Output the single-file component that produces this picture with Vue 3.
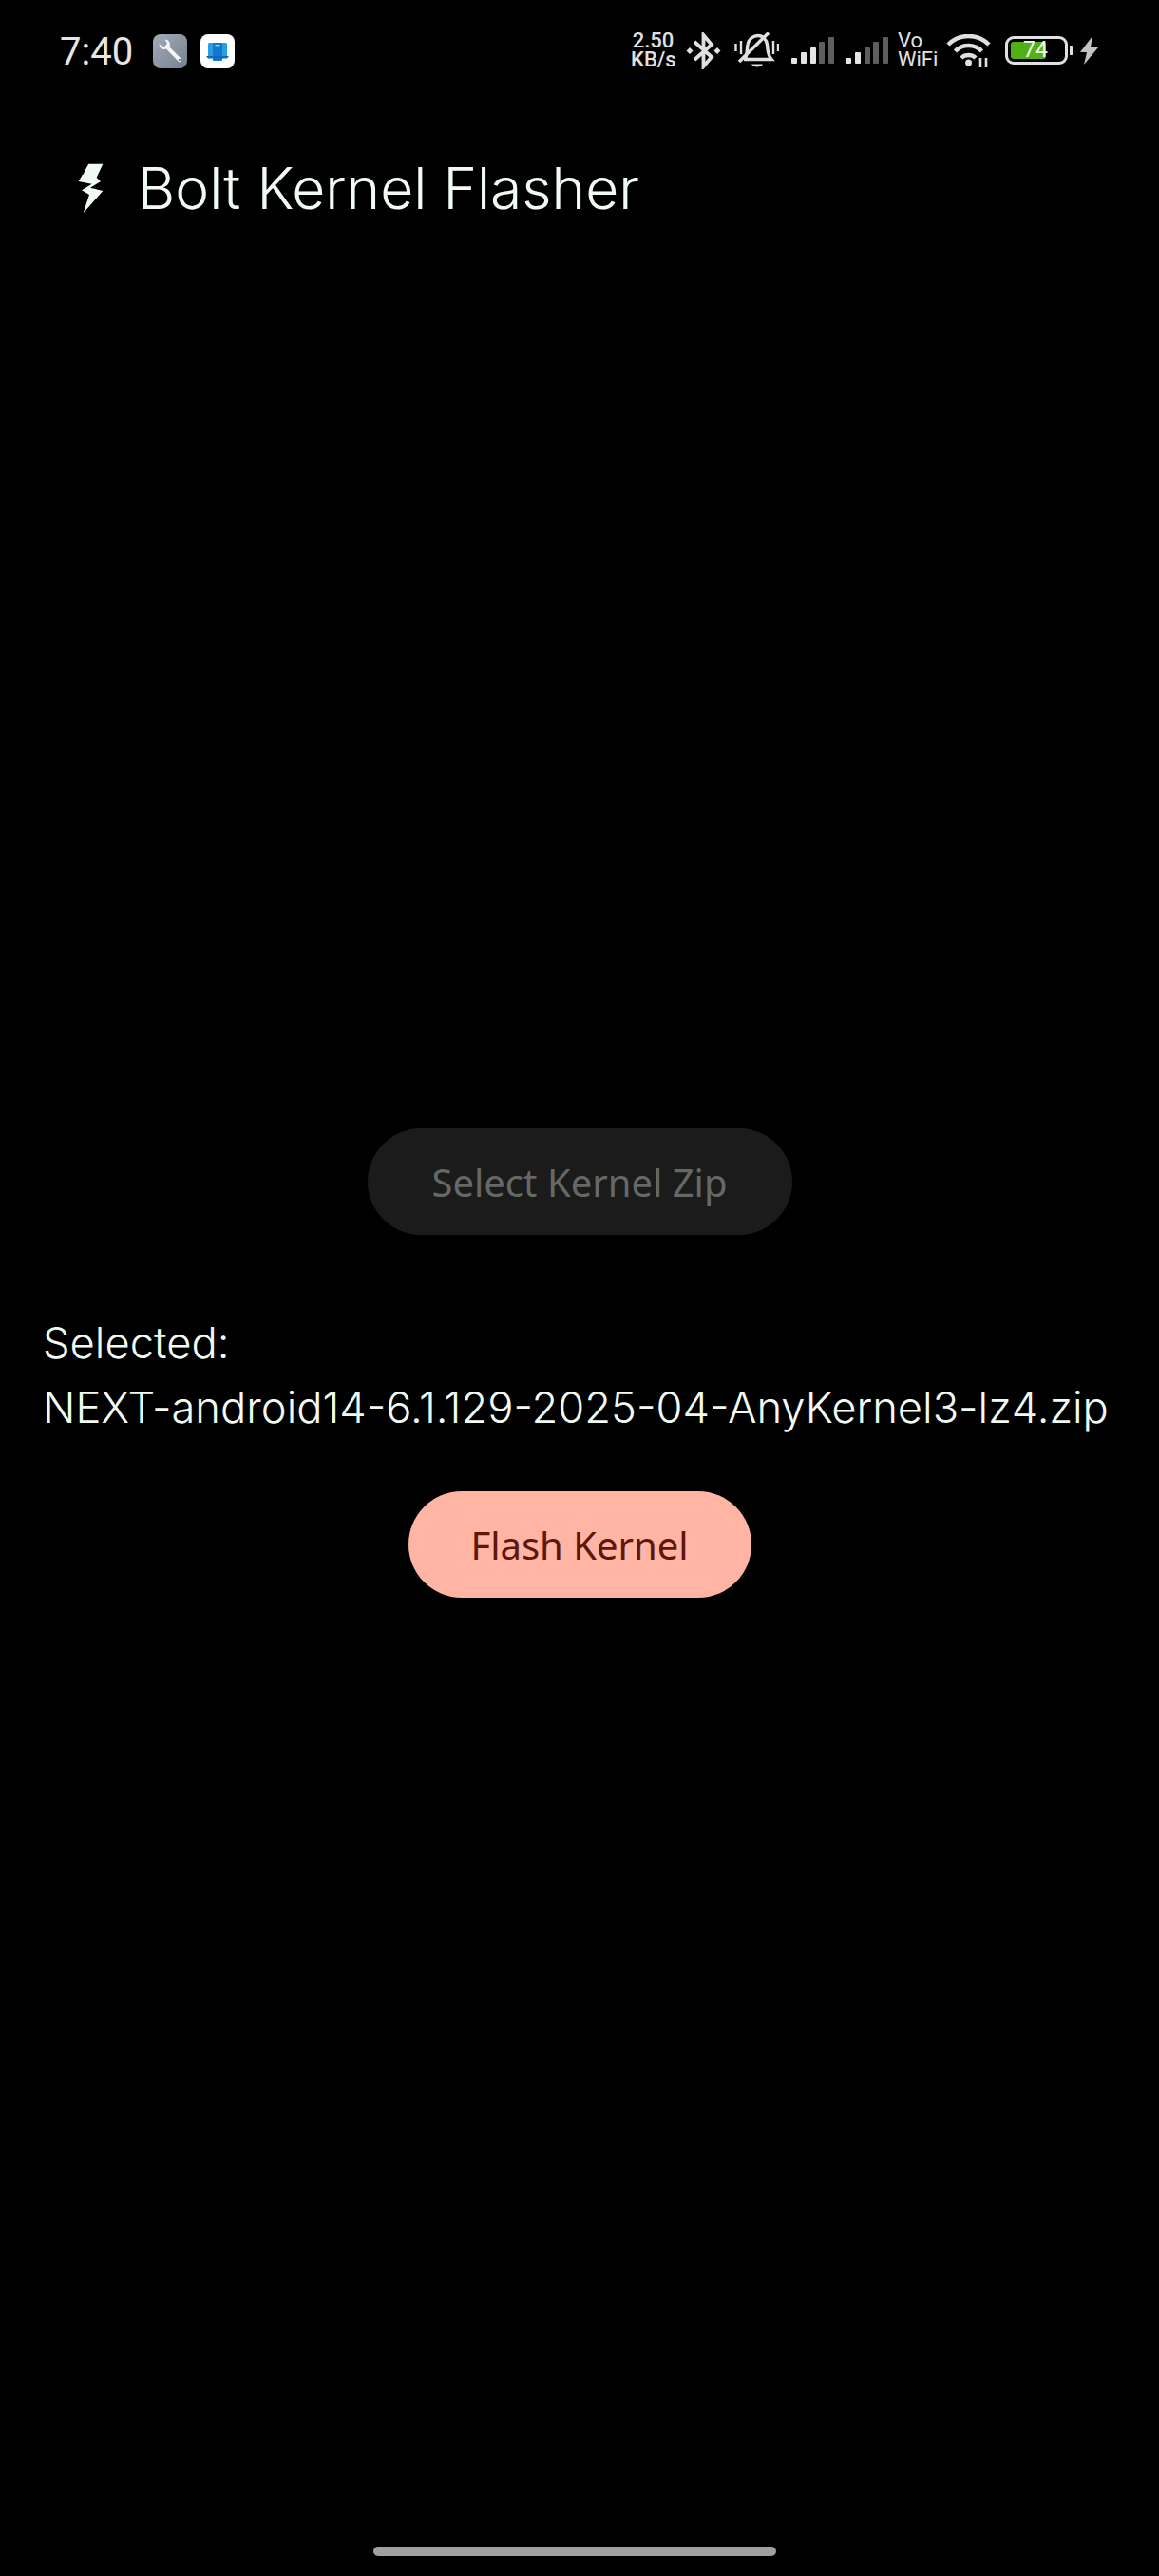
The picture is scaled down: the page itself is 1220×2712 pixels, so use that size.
<template>
  <div class="page">
    <!-- Status bar -->
    <div class="status-bar">
      <div class="status-left">
        <span class="clock">7:40</span>
        <svg class="app-icon" viewBox="0 0 36 36" width="36" height="36">
          <defs>
            <linearGradient id="wrenchBg" x1="0" y1="0" x2="1" y2="1">
              <stop offset="0" stop-color="#a3adb9" />
              <stop offset="1" stop-color="#76818f" />
            </linearGradient>
          </defs>
          <rect width="36" height="36" rx="8" fill="url(#wrenchBg)" />
          <path d="M6.500 10 C6.500 15 10.500 17 14 15.500 L26.500 28.500 C28 30.500 31.500 28 29.500 25.500 L17.500 13.500 C19 9 16 5.500 12.500 5.500 L15 9.500 L12.500 13 L9 12.500 Z" fill="#f4f5f6" />
          <circle cx="28" cy="27" r="1.300" fill="#7f8a98" />
        </svg>
        <svg class="app-icon" viewBox="0 0 36 36" width="36" height="36">
          <rect width="36" height="36" rx="8" fill="#fff" />
          <rect x="8" y="9" width="20" height="15" rx="1.500" fill="#2a9fe0" />
          <rect x="13" y="9" width="10" height="19" rx="1" fill="#0f78d0" />
          <rect x="15.500" y="11" width="5" height="1.500" fill="#8fd3f5" />
          <path d="M6 23 H30 L28 25.500 H8 Z" fill="#1565b8" />
        </svg>
      </div>

      <div class="status-right">
        <span class="speed">2.50<br />KB/s</span>
        <svg class="ic-bt" viewBox="0 0 37 39" width="37" height="39" fill="none" stroke="#e0e0e0" stroke-width="3.800">
          <path d="M9 10 L27 26 L18.500 36 V3 L27 13 L9 29" />
          <path d="M4 16 L7.500 19.500 L4 23 L0.500 19.500 Z M33 16 L36.500 19.500 L33 23 L29.500 19.500 Z" fill="#e0e0e0" stroke="none" />
        </svg>
        <svg class="ic-bell" viewBox="0 0 47 38" width="47" height="38" fill="none" stroke="#e0e0e0" stroke-width="3.400">
          <path d="M11 28 C14 24 13 18 14 13 C15 7 20 3.500 25 3.500 C30 3.500 34 8 34.500 13 C35 19 35 24 39 28.500 H10" />
          <path d="M36 0.500 L5 31" />
          <path d="M18 33.500 H30 C28 37.500 20 37.500 18 33.500 Z" fill="#e0e0e0" stroke="none" />
          <path d="M1.500 12 V20 M7 9 V23 M41 9 V23 M46 12 V20" stroke-width="2.400" />
        </svg>
        <svg class="ic-signal" viewBox="0 0 45 28" width="45" height="28">
          <rect x="0" y="22" width="6" height="6" rx="1" fill="#e4e4e4" />
          <rect x="10" y="16" width="6" height="12" rx="1" fill="#e4e4e4" />
          <rect x="20" y="11" width="6" height="17" rx="1" fill="#e4e4e4" />
          <rect x="29" y="5" width="6" height="23" rx="1" fill="#5e5e5e" />
          <rect x="39" y="0" width="6" height="28" rx="1" fill="#5e5e5e" />
        </svg>
        <svg class="ic-signal" viewBox="0 0 45 28" width="45" height="28">
          <rect x="0" y="22" width="6" height="6" rx="1" fill="#e4e4e4" />
          <rect x="10" y="16" width="6" height="12" rx="1" fill="#e4e4e4" />
          <rect x="20" y="11" width="6" height="17" rx="1" fill="#5e5e5e" />
          <rect x="29" y="5" width="6" height="23" rx="1" fill="#5e5e5e" />
          <rect x="39" y="0" width="6" height="28" rx="1" fill="#5e5e5e" />
        </svg>
        <span class="vowifi">Vo<br />WiFi</span>
        <svg class="ic-wifi" viewBox="0 0 47 35" width="47" height="35" fill="none" stroke="#e0e0e0" stroke-width="4.500">
          <path d="M2 11 C14 -1 33 -1 45 11" />
          <path d="M9.500 18 C17 10 30 10 37.500 18" />
          <path d="M16 25 C20 21 27 21 31 25" />
          <circle cx="23.500" cy="30" r="3.500" fill="#e0e0e0" stroke="none" />
          <path d="M36 25 V35 M42 25 V35" stroke-width="2.600" />
        </svg>
        <div class="battery">
          <div class="battery-body">
            <div class="battery-fill"></div>
            <span class="battery-level">74</span>
          </div>
          <div class="battery-tip"></div>
        </div>
        <svg class="ic-charge" viewBox="0 0 19 30" width="19" height="30">
          <path d="M13 0 L0 17 H7 L4 30 L19 12 H11 Z" fill="#c4c4c4" />
        </svg>
      </div>
    </div>

    <!-- App bar -->
    <header class="app-bar">
      <svg class="bolt" viewBox="246 513 81 159" width="27" height="53">
        <path d="M280 515 L325 515 L305 558 L318 570 L285 590 L325 600 L263 670 L282 612 L258 598 L290 578 L248 570 Z" fill="#f1fbf3" />
        <path d="M272 520 L262 548" stroke="#000" stroke-width="3" fill="none" />
      </svg>
      <h1 class="title">Bolt Kernel Flasher</h1>
    </header>

    <main class="content">
      <button class="btn btn-select" disabled>Select Kernel Zip</button>
      <p class="selected">Selected:<br />{{ fileName }}</p>
      <button class="btn btn-flash">Flash Kernel</button>
    </main>

    <div class="home-indicator"></div>
  </div>
</template>

<script setup>
const fileName = 'NEXT-android14-6.1.129-2025-04-AnyKernel3-lz4.zip'
</script>

<style>
html,
body {
  margin: 0;
  background: #000;
}
</style>

<style scoped>
.page {
  width: 1220px;
  height: 2712px;
  background: #000;
  display: flex;
  flex-direction: column;
  position: relative;
  overflow: hidden;
  font-family: Inter, "Noto Sans", sans-serif;
}

.status-bar {
  height: 108px;
  flex-shrink: 0;
  display: flex;
  justify-content: space-between;
  align-items: flex-start;
  padding: 0 64px 0 63px;
  box-sizing: border-box;
  color: #e0e0e0;
}

.status-left {
  display: flex;
  align-items: center;
  height: 36px;
  margin-top: 36px;
}

.clock {
  font-family: Roboto, sans-serif;
  font-size: 40px;
  width: 98px;
  color: #e6e6e6;
}

.app-icon {
  margin-right: 14px;
}

.status-right {
  display: flex;
  align-items: center;
  height: 40px;
  margin-top: 33px;
}

.speed {
  font-family: Roboto, sans-serif;
  font-size: 22px;
  font-weight: 500;
  line-height: 20px;
  text-align: center;
  width: 47px;
  margin-right: 11px;
  white-space: nowrap;
}

.ic-bell {
  margin-left: 14px;
  margin-right: 13px;
}

.ic-signal {
  margin-right: 12px;
}

.vowifi {
  font-family: Roboto, sans-serif;
  font-size: 22px;
  line-height: 20px;
  width: 41px;
  margin-left: -2px;
  margin-right: 10px;
}

.battery {
  display: flex;
  align-items: center;
  margin-left: 15px;
  margin-right: 7px;
}

.battery-body {
  width: 66px;
  height: 30px;
  border: 3px solid #e0e0e0;
  border-radius: 9px;
  box-sizing: border-box;
  padding: 3px;
  position: relative;
}

.battery-fill {
  width: 37px;
  height: 100%;
  background: #52b015;
  border-radius: 3px;
}

.battery-level {
  position: absolute;
  left: 16px;
  top: -1px;
  font-family: Roboto, sans-serif;
  font-size: 23px;
  line-height: 26px;
  color: #f2f7ec;
}

.battery-tip {
  width: 4px;
  height: 10px;
  margin-left: 2px;
  background: #e0e0e0;
  border-radius: 0 2px 2px 0;
}

.app-bar {
  height: 180px;
  flex-shrink: 0;
  display: flex;
  align-items: center;
  padding-left: 82px;
  box-sizing: border-box;
}

.bolt {
  margin-right: 36px;
}

.title {
  margin: 0;
  font-size: 60.500px;
  font-weight: 300;
  color: #f1fbf3;
  white-space: nowrap;
}

.content {
  flex: 1;
  display: flex;
  flex-direction: column;
  align-items: center;
  justify-content: center;
  padding: 0 45px 130px;
}

.btn {
  height: 112px;
  flex-shrink: 0;
  border: none;
  border-radius: 56px;
  padding: 0;
  font-family: "Noto Sans", sans-serif;
  font-size: 40px;
}

.btn-select {
  width: 447px;
  background: #1a1b1a;
  color: #646866;
}

.selected {
  align-self: flex-start;
  margin: 80px 0 54px;
  font-size: 45.300px;
  font-weight: 300;
  line-height: 68px;
  color: #f1fbf3;
  white-space: nowrap;
}

.btn-flash {
  width: 361px;
  background: #ffb4a4;
  color: #5e1708;
}

.home-indicator {
  position: absolute;
  left: 393px;
  top: 2681px;
  width: 424px;
  height: 10px;
  border-radius: 5px;
  background: #a0a0a0;
}
</style>
